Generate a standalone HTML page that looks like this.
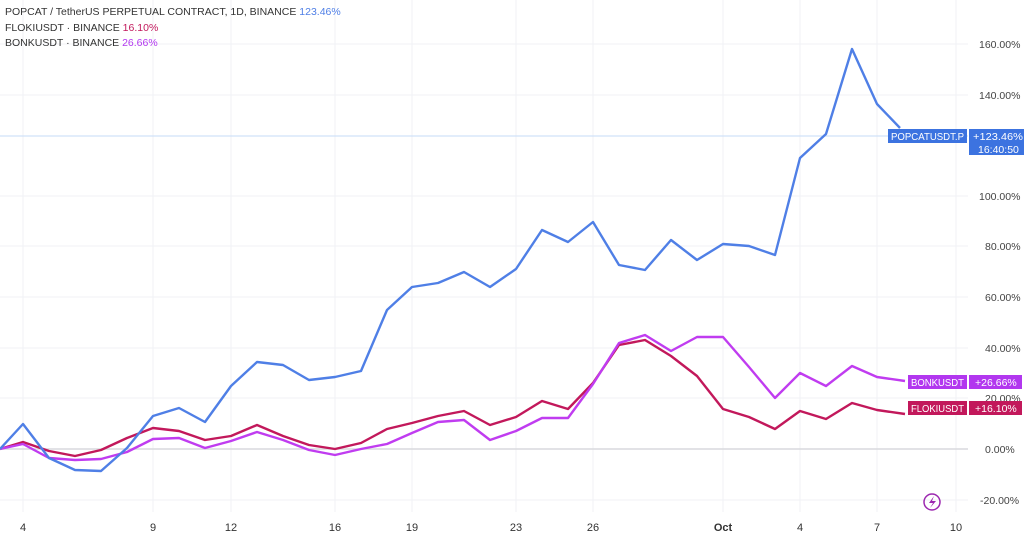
<!DOCTYPE html>
<html><head><meta charset="utf-8"><style>
body{margin:0;width:1024px;height:543px;background:#fff;overflow:hidden;font-family:"Liberation Sans",sans-serif;}
svg text{font-family:"Liberation Sans",sans-serif;}
</style></head><body>
<svg width="1024" height="543" viewBox="0 0 1024 543" xmlns="http://www.w3.org/2000/svg">
<g stroke="#f0f2f6" stroke-width="1">
<line x1="0" y1="44" x2="968" y2="44"/><line x1="0" y1="95" x2="968" y2="95"/><line x1="0" y1="196" x2="968" y2="196"/><line x1="0" y1="246" x2="968" y2="246"/><line x1="0" y1="297" x2="968" y2="297"/><line x1="0" y1="348" x2="968" y2="348"/><line x1="0" y1="398" x2="968" y2="398"/><line x1="0" y1="500" x2="968" y2="500"/>
<line x1="23" y1="0" x2="23" y2="512"/><line x1="153" y1="0" x2="153" y2="512"/><line x1="231" y1="0" x2="231" y2="512"/><line x1="335" y1="0" x2="335" y2="512"/><line x1="412" y1="0" x2="412" y2="512"/><line x1="516" y1="0" x2="516" y2="512"/><line x1="593" y1="0" x2="593" y2="512"/><line x1="723" y1="0" x2="723" y2="512"/><line x1="800" y1="0" x2="800" y2="512"/><line x1="877" y1="0" x2="877" y2="512"/><line x1="956" y1="0" x2="956" y2="512"/>
</g>
<line x1="0" y1="449" x2="968" y2="449" stroke="#d8d9dd" stroke-width="1.5"/>
<line x1="0" y1="136" x2="968" y2="136" stroke="#c6dbf7" stroke-width="1"/>
<g fill="none" stroke-width="2.4" stroke-linejoin="round">
<polyline stroke="#c2185b" points="0,449 23,442 49,451 75,456 101,450 127,438 153,428 179,431 205,440 231,436 257,425 283,436 309,445 335,449 361,443 387,429 412,423 438,416 464,411 490,425 516,417 542,401 568,409 593,383 619,345 645,340 671,356 697,376 723,409 749,417 775,429 800,411 826,419 852,403 877,410 905,414"/>
<polyline stroke="#c03cf0" points="0,449 23,444 49,458 75,460 101,459 127,452 153,439 179,438 205,448 231,441 257,432 283,440 309,450 335,455 361,449 387,444 412,433 438,422 464,420 490,440 516,431 542,418 568,418 593,384 619,343 645,335 671,351 697,337 723,337 749,367 775,398 800,373 826,386 852,366 877,377 905,381"/>
<polyline stroke="#4f7fe6" points="0,449 23,424 49,458 75,470 101,471 127,448 153,416 179,408 205,422 231,386 257,362 283,365 309,380 335,377 361,371 387,310 412,287 438,283 464,272 490,287 516,269 542,230 568,242 593,222 619,265 645,270 671,240 697,260 723,244 749,246 775,255 800,158 826,134 852,49 877,104 900,128"/>
</g>
<g font-size="10.5" fill="#444" >
<text x="979" y="48">160.00%</text><text x="979" y="99">140.00%</text><text x="979" y="200">100.00%</text><text x="985" y="250">80.00%</text><text x="985" y="301">60.00%</text><text x="985" y="352">40.00%</text><text x="985" y="402">20.00%</text><text x="985" y="453">0.00%</text><text x="980" y="504">-20.00%</text>
</g>
<g font-size="11" fill="#333" text-anchor="middle">
<text x="23" y="531">4</text><text x="153" y="531">9</text><text x="231" y="531">12</text><text x="335" y="531">16</text><text x="412" y="531">19</text><text x="516" y="531">23</text><text x="593" y="531">26</text><text x="723" y="531" font-weight="bold">Oct</text><text x="800" y="531">4</text><text x="877" y="531">7</text><text x="956" y="531">10</text>
</g>
<rect x="888" y="129" width="79" height="14" fill="#3c73e0"/>
<rect x="969" y="129" width="55" height="26" fill="#3c73e0"/>
<g font-size="10.5" fill="#fff"><text x="891" y="140" textLength="73" lengthAdjust="spacingAndGlyphs">POPCATUSDT.P</text><text x="973" y="140" textLength="50" lengthAdjust="spacingAndGlyphs">+123.46%</text><text x="978" y="153">16:40:50</text></g>
<rect x="908" y="375" width="59" height="14" fill="#b237ef"/>
<rect x="969" y="375" width="53" height="14" fill="#b237ef"/>
<g font-size="10.5" fill="#fff"><text x="911" y="386" textLength="53" lengthAdjust="spacingAndGlyphs">BONKUSDT</text><text x="975" y="386">+26.66%</text></g>
<rect x="908" y="401" width="59" height="14" fill="#c2185b"/>
<rect x="969" y="401" width="53" height="14" fill="#c2185b"/>
<g font-size="10.5" fill="#fff"><text x="911" y="412" textLength="53" lengthAdjust="spacingAndGlyphs">FLOKIUSDT</text><text x="975" y="412">+16.10%</text></g>
<circle cx="932" cy="502" r="8" fill="none" stroke="#9c27b0" stroke-width="1.5"/>
<path d="M934 496 L929 503 L933 503 L930 508 L936 501 L932 501 Z" fill="#9c27b0"/>
<g font-size="10.5" fill="#333">
<text x="5" y="15">POPCAT / TetherUS PERPETUAL CONTRACT, 1D, BINANCE <tspan fill="#4f7fe6">123.46%</tspan></text>
<text x="5" y="31">FLOKIUSDT · BINANCE <tspan fill="#c2185b">16.10%</tspan></text>
<text x="5" y="46">BONKUSDT · BINANCE <tspan fill="#b237ef">26.66%</tspan></text>
</g>
</svg>
</body></html>
